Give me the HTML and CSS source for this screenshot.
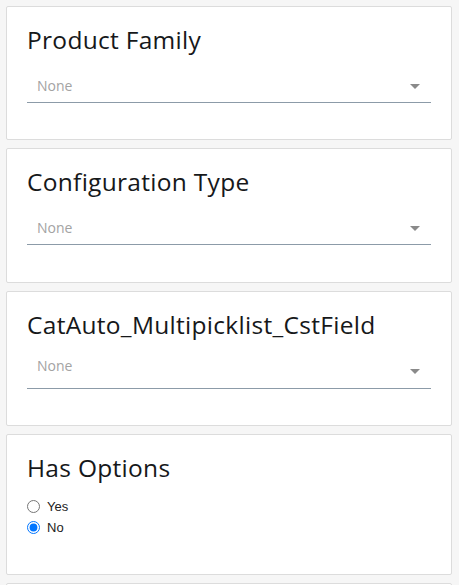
FILE: index.html
```html
<!DOCTYPE html>
<html>
<head>
<meta charset="utf-8">
<link rel="stylesheet" href="styles.css">
</head>
<body>
<div class="list">
  <section class="card">
    <h2 class="title">Product Family</h2>
    <div class="select">
      <span class="value">None</span>
      <span class="arrow"></span>
    </div>
  </section>
  <section class="card card-tall">
    <h2 class="title">Configuration Type</h2>
    <div class="select">
      <span class="value">None</span>
      <span class="arrow"></span>
    </div>
  </section>
  <section class="card card-tall">
    <h2 class="title">CatAuto_Multipicklist_CstField</h2>
    <div class="select multi">
      <span class="value">None</span>
      <span class="arrow"></span>
    </div>
  </section>
  <section class="card card-radio">
    <h2 class="title">Has Options</h2>
    <div class="radios">
      <label class="radio"><input type="radio" name="opt"> Yes</label>
      <label class="radio"><input type="radio" name="opt" checked> No</label>
    </div>
  </section>
  <section class="card"></section>
</div>
</body>
</html>
```

FILE: styles.css
```css
html, body {
  margin: 0;
  padding: 0;
  background: #f6f6f6;
}
body {
  padding: 6px 7px 0 6px;
  font-family: "Open Sans", Lato, sans-serif;
}
.list {
  display: flex;
  flex-direction: column;
  gap: 8px;
}
.card {
  background: #fff;
  border: 1px solid #dcdcdc;
  border-radius: 2px;
  height: 132px;
  box-sizing: content-box;
  padding: 0 20px;
}
.card-tall {
  height: 133px;
}
.card-radio {
  height: 139px;
}
.title {
  margin: 0;
  padding-top: 17px;
  font-weight: 400;
  font-size: 24.5px;
  letter-spacing: 0.3px;
  line-height: 32px;
  color: #16181a;
}
.select {
  margin-top: 15px;
  height: 31px;
  border-bottom: 1px solid #8c9ba8;
  position: relative;
  display: flex;
  align-items: center;
  padding-left: 10px;
}
.select.multi {
  align-items: flex-start;
  height: 38px;
  margin-top: 9px;
}
.value {
  font-size: 14px;
  color: #a3a3a3;
  padding-bottom: 2px;
}
.multi .value {
  padding-top: 6px;
  padding-bottom: 0;
}
.arrow {
  position: absolute;
  right: 11px;
  top: 13px;
  width: 0;
  height: 0;
  border-left: 5px solid transparent;
  border-right: 5px solid transparent;
  border-top: 5px solid #8a8a8a;
}
.multi .arrow {
  top: 19px;
}
.radios {
  margin-top: 13px;
  display: flex;
  flex-direction: column;
  gap: 3px;
}
.radio {
  display: flex;
  align-items: center;
  font-family: "Liberation Sans", Arial, sans-serif;
  font-size: 13px;
  color: #222;
  height: 18px;
}
.radio input {
  margin: 0 7px 0 0;
  width: 13px;
  height: 13px;
}
```
